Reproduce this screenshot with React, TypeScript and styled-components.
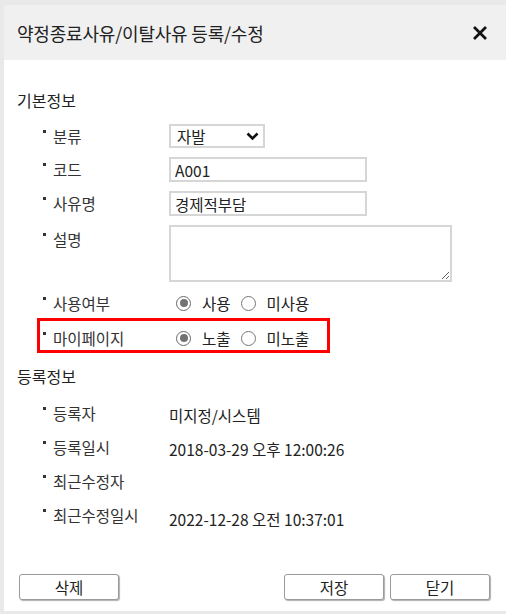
import React from "react";
import styled, { createGlobalStyle } from "styled-components";

const Global = createGlobalStyle`
  html, body { margin: 0; padding: 0; background: #e9e9e9; }
  body { font-family: "Noto Sans CJK KR", "Noto Sans", sans-serif; color: #222; }
  * { box-sizing: border-box; }
`;

const Dialog = styled.div`
  margin: 5px 0 0 4px;
  width: 502px;
  height: 606px;
  display: flex;
  flex-direction: column;
  background: #fff;
`;

const Header = styled.div`
  height: 55px;
  flex: none;
  background: #f0f0f0;
  display: flex;
  align-items: center;
  justify-content: space-between;
  padding: 0 18px 0 13px;
`;

const Title = styled.div`
  font-size: 18px;
  line-height: 24px;
  color: #222;
  letter-spacing: -0.2px;
`;

const CloseBtn = styled.button`
  border: 0;
  background: transparent;
  padding: 0;
  width: 16px;
  height: 16px;
  display: flex;
  align-items: center;
  justify-content: center;
  cursor: pointer;
`;

const Body = styled.div`
  flex: 1;
  display: flex;
  flex-direction: column;
  padding: 28px 15px 0 13px;
`;

const SectionTitle = styled.div<{ $mt?: number }>`
  font-size: 16px;
  line-height: 24px;
  color: #222;
  margin-top: ${(p) => p.$mt ?? 0}px;
`;

const Fields = styled.div<{ $gap: number; $mt: number }>`
  display: flex;
  flex-direction: column;
  gap: ${(p) => p.$gap}px;
  margin-top: ${(p) => p.$mt}px;
`;

const Row = styled.div<{ $h?: number; $highlight?: boolean }>`
  display: flex;
  align-items: flex-start;
  padding-left: 26px;
  min-height: ${(p) => p.$h ?? 24}px;
  ${(p) =>
    p.$highlight
      ? `
    margin-left: 20px;
    padding-left: 3px;
    width: 293px;
    border: 3px solid #ff0000;
    padding-top: 5px;
    min-height: 35px;
    margin-top: -6px;
  `
      : ""}
`;

const Label = styled.div<{ $pt?: number }>`
  width: 126px;
  flex: none;
  display: flex;
  align-items: flex-start;
  font-size: 15.5px;
  line-height: 20px;
  color: #333;
  padding-top: ${(p) => p.$pt ?? 2}px;
  &::before {
    content: "";
    width: 3px;
    height: 3px;
    background: #333;
    margin: 4px 7px 0 0;
    flex: none;
  }
`;

const Value = styled.div<{ $pt?: number }>`
  font-size: 15.5px;
  line-height: 20px;
  color: #222;
  padding-top: ${(p) => p.$pt ?? 4}px;
`;

const SelectBox = styled.div`
  width: 96px;
  height: 24px;
  border: 2px solid #d6d6d6;
  display: flex;
  align-items: center;
  justify-content: space-between;
  padding: 0 4px 0 6px;
  font-size: 15.5px;
  color: #222;
`;

const TextInput = styled.input`
  width: 198px;
  height: 25px;
  border: 2px solid #d6d6d6;
  padding: 0 4px;
  font-family: inherit;
  font-size: 15.5px;
  color: #222;
  outline: none;
`;

const TextArea = styled.textarea`
  width: 283px;
  height: 57px;
  border: 2px solid #d6d6d6;
  font-family: inherit;
  font-size: 15px;
  resize: both;
  outline: none;
  display: block;
`;

const RadioGroup = styled.div`
  display: flex;
  align-items: center;
  height: 24px;
  margin-left: 7px;
`;

const RadioItem = styled.label`
  display: flex;
  align-items: center;
  font-size: 15.5px;
  color: #222;
  margin-right: 10px;
`;

const RadioCircle = styled.span<{ $checked?: boolean }>`
  width: 15px;
  height: 15px;
  border-radius: 50%;
  border: 1.5px solid ${(p) => (p.$checked ? "#6a6a6a" : "#777")};
  background: #fff;
  display: flex;
  align-items: center;
  justify-content: center;
  margin-right: 11px;
  &::after {
    content: "";
    width: 8px;
    height: 8px;
    border-radius: 50%;
    background: ${(p) => (p.$checked ? "#737373" : "transparent")};
  }
`;

const Footer = styled.div`
  margin-top: auto;
  display: flex;
  align-items: center;
  padding: 0 1px 11px 2px;
`;

const Button = styled.button<{ $push?: boolean }>`
  width: 100px;
  height: 26px;
  background: #fff;
  border: 1px solid #9a9a9a;
  border-radius: 3px;
  box-shadow: 1px 1px 1px #b0b0b0;
  font-family: inherit;
  font-size: 15.5px;
  color: #222;
  padding: 0;
  margin-left: ${(p) => (p.$push ? "auto" : "6px")};
  &:first-child { margin-left: 0; }
`;

function Radio({ checked, label }: { checked?: boolean; label: string }) {
  return (
    <RadioItem>
      <RadioCircle $checked={checked} />
      {label}
    </RadioItem>
  );
}

export default function App() {
  return (
    <>
      <Global />
      <Dialog>
        <Header>
          <Title>약정종료사유/이탈사유 등록/수정</Title>
          <CloseBtn aria-label="닫기">
            <svg width="16" height="16" viewBox="0 0 16 16">
              <path d="M2 2 L14 14 M14 2 L2 14" stroke="#111" strokeWidth="2.8" strokeLinecap="butt" />
            </svg>
          </CloseBtn>
        </Header>
        <Body>
          <SectionTitle>기본정보</SectionTitle>
          <Fields $gap={9} $mt={12}>
            <Row>
              <Label>분류</Label>
              <SelectBox>
                <span>자발</span>
                <svg width="13" height="9" viewBox="0 0 13 9">
                  <path d="M1.5 1.5 L6.5 6.5 L11.5 1.5" fill="none" stroke="#111" strokeWidth="2.6" />
                </svg>
              </SelectBox>
            </Row>
            <Row>
              <Label>코드</Label>
              <TextInput defaultValue="A001" />
            </Row>
            <Row>
              <Label>사유명</Label>
              <TextInput defaultValue="경제적부담" />
            </Row>
            <Row>
              <Label $pt={4}>설명</Label>
              <TextArea />
            </Row>
            <Row>
              <Label>사용여부</Label>
              <RadioGroup>
                <Radio checked label="사용" />
                <Radio label="미사용" />
              </RadioGroup>
            </Row>
            <Row $highlight>
              <Label>마이페이지</Label>
              <RadioGroup>
                <Radio checked label="노출" />
                <Radio label="미노출" />
              </RadioGroup>
            </Row>
          </Fields>
          <SectionTitle $mt={11}>등록정보</SectionTitle>
          <Fields $gap={10} $mt={13}>
            <Row $h={24}>
              <Label>등록자</Label>
              <Value>미지정/시스템</Value>
            </Row>
            <Row $h={24}>
              <Label>등록일시</Label>
              <Value>2018-03-29 오후 12:00:26</Value>
            </Row>
            <Row $h={24}>
              <Label>최근수정자</Label>
              <Value></Value>
            </Row>
            <Row $h={24}>
              <Label>최근수정일시</Label>
              <Value $pt={6}>2022-12-28 오전 10:37:01</Value>
            </Row>
          </Fields>
          <Footer>
            <Button>삭제</Button>
            <Button $push>저장</Button>
            <Button>닫기</Button>
          </Footer>
        </Body>
      </Dialog>
    </>
  );
}
